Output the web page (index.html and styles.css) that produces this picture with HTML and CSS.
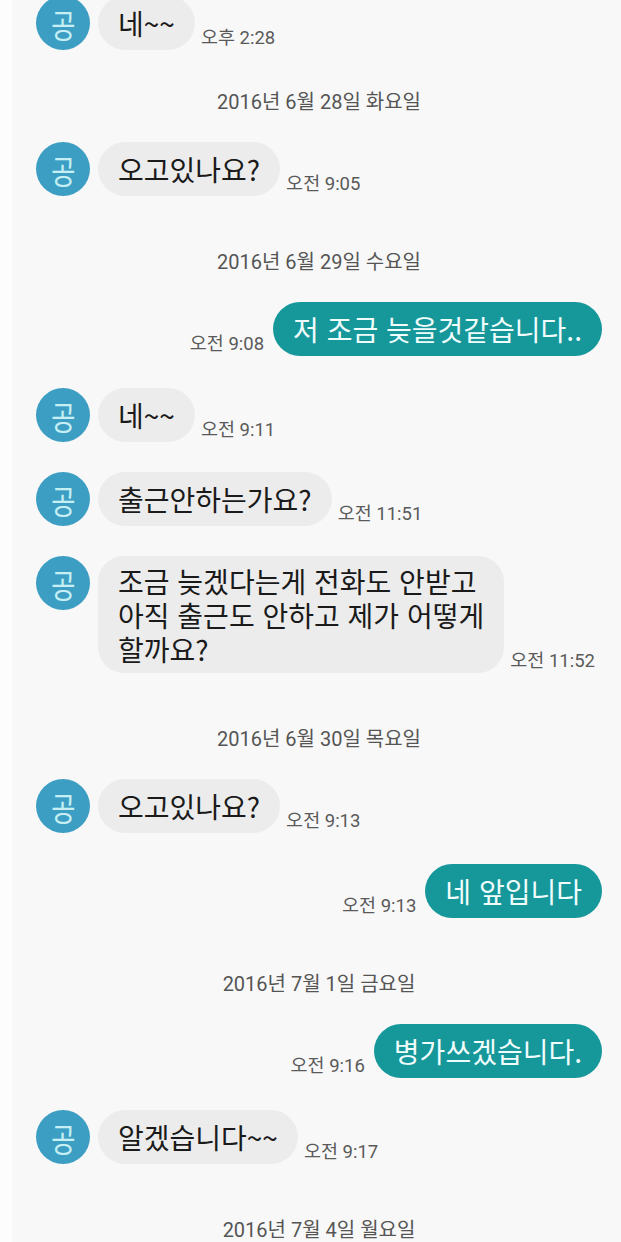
FILE: index.html
```html
<!DOCTYPE html>
<html lang="ko">
<head>
    <meta charset="UTF-8">
    <link rel="stylesheet" href="styles.css">
</head>
<body>
    <div class="chat">
        <div class="row row-in row-first">
            <div class="avatar"><span>공</span></div>
            <div class="bubble">네~~</div>
            <span class="time">오후 2:28</span>
        </div>

        <div class="date date-first">2016년 6월 28일 화요일</div>

        <div class="row row-in">
            <div class="avatar"><span>공</span></div>
            <div class="bubble">오고있나요?</div>
            <span class="time">오전 9:05</span>
        </div>

        <div class="date">2016년 6월 29일 수요일</div>

        <div class="row row-out">
            <span class="time">오전 9:08</span>
            <div class="bubble">저 조금 늦을것같습니다..</div>
        </div>

        <div class="row row-in">
            <div class="avatar"><span>공</span></div>
            <div class="bubble">네~~</div>
            <span class="time">오전 9:11</span>
        </div>

        <div class="row row-in">
            <div class="avatar"><span>공</span></div>
            <div class="bubble">출근안하는가요?</div>
            <span class="time">오전 11:51</span>
        </div>

        <div class="row row-in">
            <div class="avatar"><span>공</span></div>
            <div class="bubble bubble-multi">조금 늦겠다는게 전화도 안받고<br>아직 출근도 안하고 제가 어떻게<br>할까요?</div>
            <span class="time">오전 11:52</span>
        </div>

        <div class="date">2016년 6월 30일 목요일</div>

        <div class="row row-in">
            <div class="avatar"><span>공</span></div>
            <div class="bubble">오고있나요?</div>
            <span class="time">오전 9:13</span>
        </div>

        <div class="row row-out">
            <span class="time">오전 9:13</span>
            <div class="bubble">네 앞입니다</div>
        </div>

        <div class="date">2016년 7월 1일 금요일</div>

        <div class="row row-out">
            <span class="time">오전 9:16</span>
            <div class="bubble">병가쓰겠습니다.</div>
        </div>

        <div class="row row-in">
            <div class="avatar"><span>공</span></div>
            <div class="bubble">알겠습니다~~</div>
            <span class="time">오전 9:17</span>
        </div>

        <div class="date">2016년 7월 4일 월요일</div>
    </div>
</body>
</html>
```

FILE: styles.css
```css
body {
    margin: 0;
    background-color: #fdfdfd;
    font-family: "Noto Sans CJK KR", "Noto Sans", sans-serif;
}

.chat {
    margin-left: 12px;
    height: 1242px;
    overflow: hidden;
    background-color: #f8f8f8;
    display: flex;
    flex-direction: column;
    padding: 0 19px 0 24px;
}

.row {
    display: flex;
    align-items: flex-end;
    margin-top: 30px;
}

.row-first {
    margin-top: -4px;
}

.row-out {
    justify-content: flex-end;
    margin-top: 31px;
}

.row-out + .row-in {
    margin-top: 32px;
}

.avatar {
    flex: none;
    width: 54px;
    height: 54px;
    border-radius: 50%;
    background-color: #3d9ec3;
    color: #c6eff4;
    font-size: 31px;
    line-height: 1;
    display: flex;
    align-items: center;
    justify-content: center;
    align-self: flex-start;
    margin-right: 8px;
}

.avatar span {
    display: inline-block;
    transform: scale(0.85, 1.05);
}

.bubble {
    background-color: #ececec;
    color: #1a1a1a;
    border-radius: 27px;
    padding: 10px 20px;
    font-size: 28px;
    line-height: 34px;
    white-space: nowrap;
}

.bubble-multi {
    padding: 8px 20px 7px;
    border-radius: 26px;
}

.row-out .bubble {
    background-color: #16979a;
    color: #f0fdfd;
}

.time {
    flex: none;
    font-family: Roboto, "Noto Sans CJK KR", sans-serif;
    font-size: 18.5px;
    line-height: 20px;
    color: #5a5a5a;
    margin: 0 0 2px 6px;
}

.row-out .time {
    margin: 0 9px 2px 0;
}

.date {
    text-align: center;
    font-family: Roboto, "Noto Sans CJK KR", sans-serif;
    font-size: 20px;
    line-height: 20px;
    color: #555;
    margin-top: 56px;
}

.date-first {
    margin-top: 42px;
}

.date + .row {
    margin-top: 30px;
}
```
